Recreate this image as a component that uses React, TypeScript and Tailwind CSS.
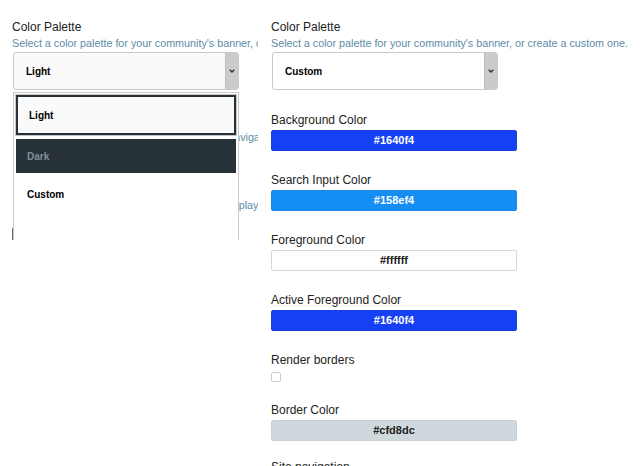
const subtitle = "Select a color palette for your community's banner, or create a custom one.";

function Chevron() {
  return (
    <svg width="6" height="4" viewBox="0 0 6 4" className="text-[#333]">
      <polyline points="0.7,0.7 3,3 5.3,0.7" fill="none" stroke="currentColor" strokeWidth="1.4" />
    </svg>
  );
}

function PaletteSelect({ value, bg }: { value: string; bg: string }) {
  return (
    <div
      className={`flex h-[38px] w-[226px] items-stretch overflow-hidden rounded-[3px] border border-[#c8c8c8] ${bg}`}
    >
      <div className="flex flex-1 items-center pl-[12px] text-[10px] font-bold text-black">{value}</div>
      <div className="flex w-[13px] items-center justify-center border-l border-[#bdbdbd] bg-[#cbcbcb]">
        <Chevron />
      </div>
    </div>
  );
}

function Label({ children }: { children: React.ReactNode }) {
  return <div className="h-[16px] text-[12px] leading-[16px] text-[#222]">{children}</div>;
}

function Hint({ children, className = '' }: { children: React.ReactNode; className?: string }) {
  return (
    <div className={`h-[16px] whitespace-nowrap text-[10.75px] leading-[16px] text-[#5d8ca6] ${className}`}>
      {children}
    </div>
  );
}

function ColorField({
  label,
  value,
  className,
}: {
  label: string;
  value: string;
  className: string;
}) {
  return (
    <div className="flex flex-col">
      <Label>{label}</Label>
      <div
        className={`mt-[2px] flex h-[21px] w-[246px] items-center justify-center rounded-[2px] border text-[11px] font-bold ${className}`}
      >
        {value}
      </div>
    </div>
  );
}

export default function App() {
  return (
    <div className="flex h-[466px] w-[640px] overflow-hidden bg-white font-['Liberation_Sans',Arial,sans-serif]">
      {/* LEFT: palette dropdown open */}
      <div className="ml-[12px] h-[240px] w-[246px] shrink-0 overflow-hidden">
        <div className="relative flex flex-col pt-[19px]">
          <Label>Color Palette</Label>
          <Hint className="overflow-hidden">{subtitle}</Hint>
          <div className="mt-[1px] pl-[1px]">
            <PaletteSelect value="Light" bg="bg-[#fafafa]" />
          </div>

          {/* fields hidden under the menu */}
          <Hint className="mt-[39px] overflow-hidden pl-[2px]">
            Show or hide links to the community's global navigation bar.
          </Hint>
          <Hint className="mt-[52px] overflow-hidden pl-[2px]">
            Choose the style of the embedded audio/video player.
          </Hint>
          <div className="mt-[14px] h-[40px] w-[220px] rounded-[2px] border border-[#666]" />

          {/* open menu */}
          <div className="absolute left-[1px] top-[92px] flex h-[170px] w-[226px] flex-col border border-[#c9c9c9] bg-white px-[2px] pt-[2px]">
            <div className="flex h-[40px] items-center border-2 border-[#263238] bg-[#fafafa] pl-[11px] text-[10px] font-bold text-black ring-1 ring-[#c4c4c4]">
              Light
            </div>
            <div className="mt-[4px] flex h-[34px] items-center bg-[#263238] pl-[11px] text-[10px] font-bold text-[#7f8e97]">
              Dark
            </div>
            <div className="flex h-[42px] items-center pl-[11px] text-[10px] font-bold text-black">Custom</div>
          </div>
        </div>
      </div>

      {/* RIGHT: custom palette */}
      <div className="ml-[13px] flex flex-col pt-[19px]">
        <Label>Color Palette</Label>
        <Hint>{subtitle}</Hint>
        <div className="mt-[1px] pl-[1px]">
          <PaletteSelect value="Custom" bg="bg-white" />
        </div>

        <div className="mt-[22px] flex flex-col gap-[21px]">
          <ColorField label="Background Color" value="#1640f4" className="border-[#1a3ee0] bg-[#1640f4] text-white" />
          <ColorField label="Search Input Color" value="#158ef4" className="border-[#1a88e6] bg-[#158ef4] text-white" />
          <ColorField label="Foreground Color" value="#ffffff" className="border-[#d3dade] bg-white text-[#222]" />
          <ColorField
            label="Active Foreground Color"
            value="#1640f4"
            className="border-[#1a3ee0] bg-[#1640f4] text-white"
          />
          <div className="flex flex-col">
            <Label>Render borders</Label>
            <div className="mt-[4px] h-[10px] w-[10px] rounded-[2px] border border-[#c5cbcf] bg-white" />
          </div>
          <div className="-mt-[1px]">
            <ColorField label="Border Color" value="#cfd8dc" className="border-[#c8d1d5] bg-[#cfd8dc] text-[#222]" />
          </div>
          <div className="-mt-[3px]">
            <Label>Site navigation</Label>
          </div>
        </div>
      </div>
    </div>
  );
}
